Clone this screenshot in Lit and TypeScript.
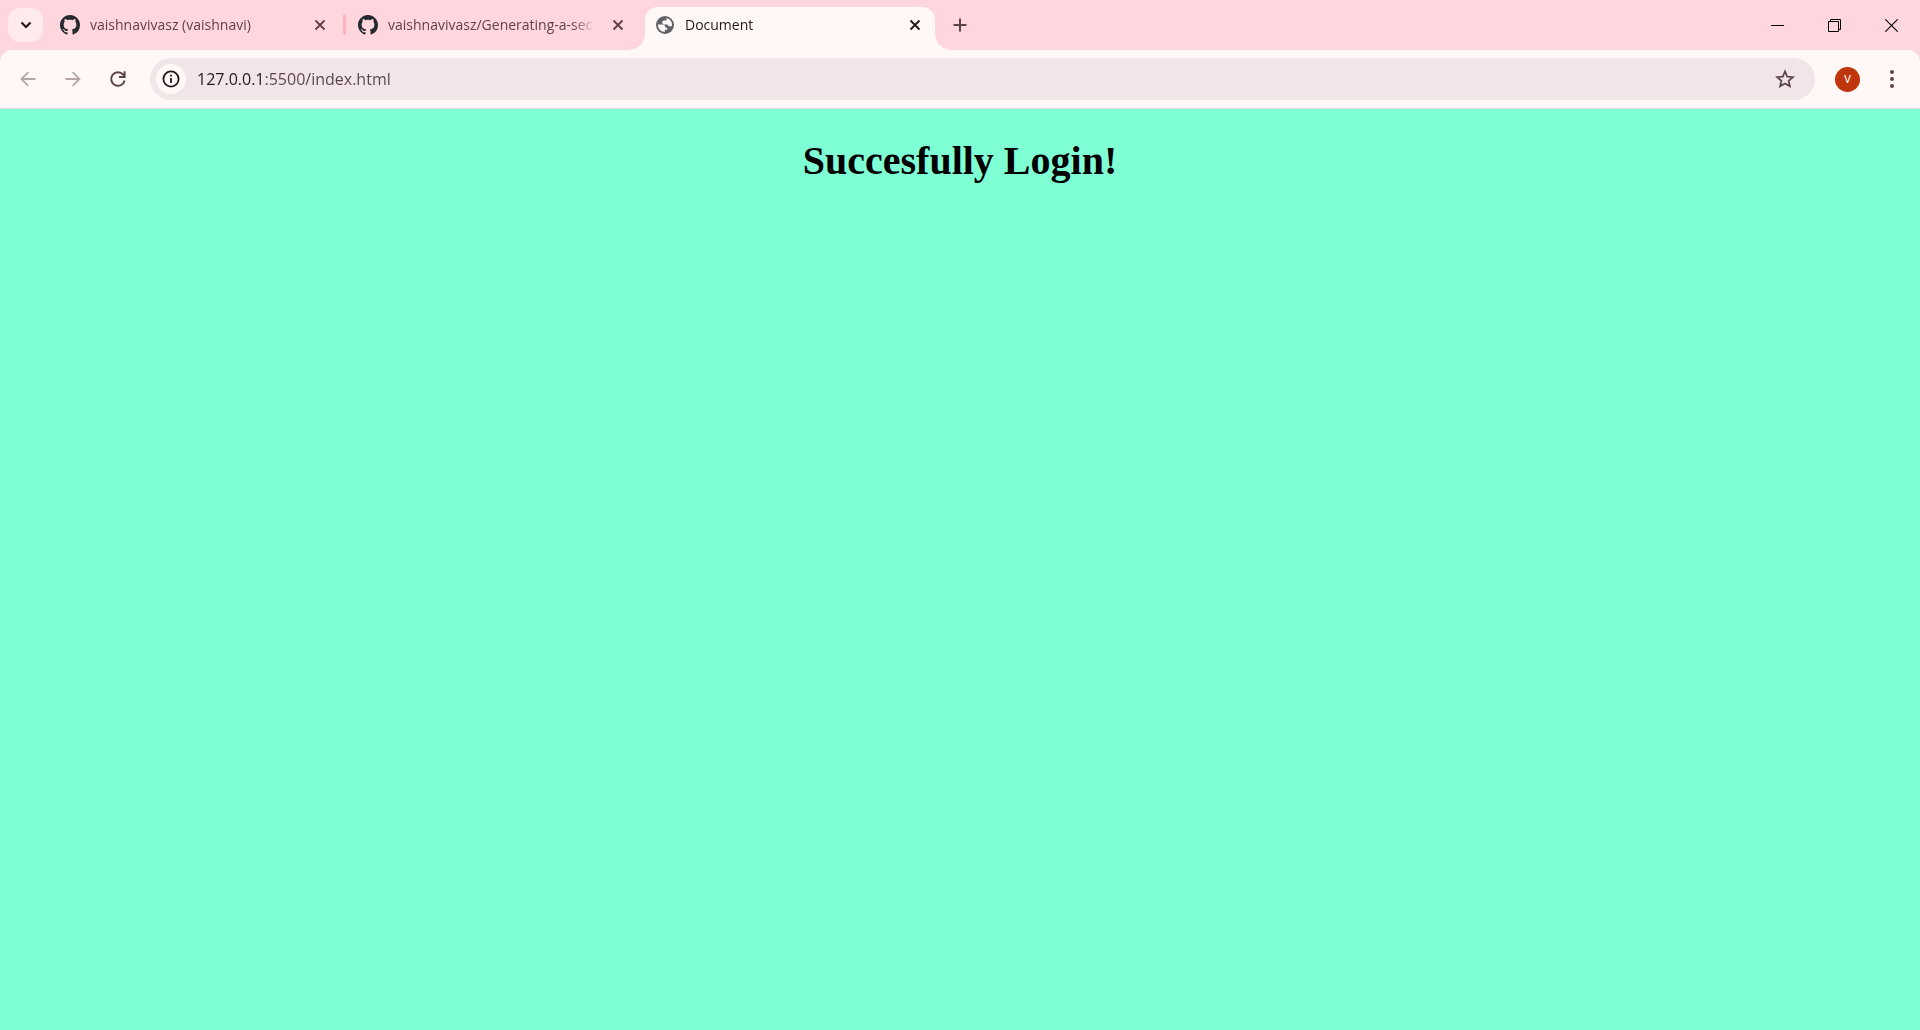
import { LitElement, html, css, svg, nothing } from "lit";
import { customElement, property } from "lit/decorators.js";
import { classMap } from "lit/directives/class-map.js";

const githubMark = svg`<svg viewBox="0 0 16 16" width="20" height="20" fill="#24292f" aria-hidden="true">
  <path d="M8 0C3.58 0 0 3.58 0 8c0 3.54 2.29 6.53 5.47 7.59.4.07.55-.17.55-.38 0-.19-.01-.82-.01-1.49-2.01.37-2.53-.49-2.69-.94-.09-.23-.48-.94-.82-1.13-.28-.15-.68-.52-.01-.53.63-.01 1.08.58 1.23.82.72 1.21 1.87.87 2.33.66.07-.52.28-.87.51-1.07-1.78-.2-3.64-.89-3.64-3.95 0-.87.31-1.59.82-2.15-.08-.2-.36-1.02.08-2.12 0 0 .67-.21 2.2.82.64-.18 1.32-.27 2-.27s1.36.09 2 .27c1.53-1.04 2.2-.82 2.2-.82.44 1.1.16 1.92.08 2.12.51.56.82 1.27.82 2.15 0 3.07-1.87 3.75-3.65 3.95.29.25.54.73.54 1.48 0 1.07-.01 1.93-.01 2.2 0 .21.15.46.55.38A8.01 8.01 0 0 0 16 8c0-4.42-3.58-8-8-8z"/></svg>`;

const globe = svg`<svg viewBox="0 0 20 20" width="20" height="20" aria-hidden="true">
  <circle cx="10" cy="10" r="9" fill="#5f6368"/>
  <path d="M2.900 9.600h4.300c2 0 3.100 1 3.100 2.300v.9h2v2h-2.500v2.300A7.100 7.100 0 0 1 2.900 9.600z" fill="#fff8f7"/>
  <path d="M11.600 3.100A7.100 7.100 0 0 1 17.100 10.400c-.5.700-1.200 1.100-2.100 1.100-1.500 0-2.100-.8-2.400-1.900H9.700c-1.500 0-2.500-.8-2.500-2.100 0-1.200.9-1.900 2.100-1.900h1.100c.8 0 1.200-.5 1.200-1.200z" fill="#fff8f7"/></svg>`;

const cross = svg`<svg viewBox="0 0 20 20" width="20" height="20" aria-hidden="true">
  <path d="M5.500 5.500l9 9M14.500 5.500l-9 9" stroke="currentColor" stroke-width="1.900"/></svg>`;

@customElement("browser-tab")
export class BrowserTab extends LitElement {
  @property() label = "";
  @property() icon: "github" | "globe" = "globe";
  @property({ type: Boolean }) active = false;

  static styles = css`
    :host { display: block; flex: 0 1 auto; width: 290px; min-width: 0; }
    .tab {
      position: relative;
      display: flex;
      align-items: center;
      height: 43px;
      box-sizing: border-box;
      padding: 0 10px 7px;
      color: #5f4248;
    }
    .active { background: #fff8f7; color: #22191b; border-radius: 13px 13px 0 0; }
    .active::before, .active::after {
      content: "";
      position: absolute;
      bottom: 0;
      width: 15px;
      height: 15px;
    }
    .active::before { right: 100%; background: radial-gradient(circle at 0 0, transparent 14px, #fff8f7 15px); }
    .active::after { left: 100%; background: radial-gradient(circle at 100% 0, transparent 14px, #fff8f7 15px); }
    .icon, .close { display: flex; flex: none; }
    .label {
      flex: 1;
      min-width: 0;
      margin: 0 12px 0 10px;
      overflow: hidden;
      white-space: nowrap;
      font-size: 14px;
      line-height: 20px;
      mask-image: linear-gradient(to left, transparent, #000 24px);
    }
    .close { border: 0; padding: 0; background: none; color: inherit; }
  `;

  render() {
    return html`<div class=${classMap({ tab: true, active: this.active })}
        role="tab" aria-selected=${this.active ? "true" : "false"}>
      <span class="icon">${this.icon === "github" ? githubMark : globe}</span>
      <span class="label">${this.label}</span>
      <button class="close" aria-label="Close tab">${cross}</button>
    </div>`;
  }
}

@customElement("app-root")
export class AppRoot extends LitElement {
  static styles = css`
    :host {
      display: flex;
      flex-direction: column;
      min-height: 100vh;
      font-family: "Open Sans", "Noto Sans", sans-serif;
      background: #7fffd4;
    }
    button {
      display: flex;
      align-items: center;
      justify-content: center;
      flex: none;
      border: 0;
      padding: 0;
      background: none;
      color: #5f4248;
    }
    .frame { background: #ffd6de; }
    .strip { display: flex; align-items: center; height: 50px; }
    .search { width: 35px; height: 34px; margin: 0 7px 0 8px; border-radius: 12px; background: #ffebee; color: #22191b; }
    .tabs { display: flex; align-items: center; align-self: flex-end; min-width: 0; }
    .divider { flex: none; width: 3px; height: 21px; margin: 0 2px 8px 3px; border-radius: 2px; background: #ffb1c0; }
    .tabs browser-tab[active] { margin-left: 7px; }
    .add { width: 30px; height: 30px; margin-left: 10px; }
    .window { display: flex; align-self: stretch; margin-left: auto; color: #000; }
    .window button { width: 57px; color: inherit; }
    .toolbar {
      display: flex;
      align-items: center;
      height: 58px;
      background: #fff8f7;
      border-radius: 12px 12px 0 0;
      border-bottom: 1px solid #eadfe2;
    }
    .nav { display: flex; gap: 10px; padding-left: 10px; }
    .nav button { width: 35px; height: 35px; }
    .nav button:disabled { color: #b5a5a8; }
    .address {
      flex: 1;
      min-width: 0;
      display: flex;
      align-items: center;
      height: 42px;
      margin-left: 15px;
      padding: 0 20px 0 6px;
      box-sizing: border-box;
      border-radius: 21px;
      background: #f1e5e9;
    }
    .info { width: 30px; height: 30px; border-radius: 50%; background: #fff8f7; color: #22191b; }
    .url {
      flex: 1;
      min-width: 0;
      margin: 0 12px 0 11px;
      padding: 0;
      border: 0;
      outline: 0;
      font: 16px/24px "Open Sans", "Noto Sans", sans-serif;
      color: #22191b;
      background: linear-gradient(to right, #22191b 67px, #5a4347 67px);
      background-clip: text;
      -webkit-text-fill-color: transparent;
    }
    .avatar { width: 25px; height: 25px; margin-left: 20px; border-radius: 50%; background: #bf360c; color: #fff; font: 11px/25px Roboto, sans-serif; }
    .menu { width: 24px; height: 34px; margin: 0 16px 0 20px; }
    .page { flex: 1; padding: 8px; }
    h1 { margin: 21px 0; text-align: center; font: bold 40px/46px "Liberation Serif", serif; color: #000; }
  `;

  private tabs = [
    { label: "vaishnavivasz (vaishnavi)", icon: "github", active: false },
    { label: "vaishnavivasz/Generating-a-sec", icon: "github", active: false },
    { label: "Document", icon: "globe", active: true },
  ];

  render() {
    return html`
      <header class="frame">
        <div class="strip">
          <button class="search" aria-label="Search tabs">
            <svg width="16" height="16" viewBox="0 0 16 16"><path d="M3.500 5.500L8 10l4.500-4.500" fill="none" stroke="currentColor" stroke-width="2.200"/></svg>
          </button>
          <div class="tabs" role="tablist">
            ${this.tabs.map((t, i) => html`
              ${i === 1 ? html`<span class="divider"></span>` : nothing}
              <browser-tab .label=${t.label} .icon=${t.icon as "github" | "globe"} ?active=${t.active}></browser-tab>`)}
          </div>
          <button class="add" aria-label="New tab">
            <svg width="14" height="14" viewBox="0 0 14 14"><path d="M7 .5v13M.5 7h13" stroke="currentColor" stroke-width="2"/></svg>
          </button>
          <div class="window">
            <button aria-label="Minimize"><svg width="13" height="13" viewBox="0 0 13 13"><path d="M0 6.500h13" stroke="currentColor"/></svg></button>
            <button aria-label="Restore"><svg width="13" height="13" viewBox="0 0 13 13" fill="none" stroke="currentColor"><path d="M.5 2.500h10v10H.5zM2.500 2.500v-2h10v10h-2"/></svg></button>
            <button aria-label="Close window"><svg width="13" height="13" viewBox="0 0 13 13"><path d="M.3.3l12.400 12.400M12.700.3L.3 12.700" stroke="currentColor" stroke-width="1.100"/></svg></button>
          </div>
        </div>
        <div class="toolbar">
          <nav class="nav">
            <button disabled aria-label="Back"><svg width="16" height="16" viewBox="0 0 16 16" fill="none" stroke="currentColor" stroke-width="1.800"><path d="M15.500 8H2M8.300 1.200L1.500 8l6.800 6.800"/></svg></button>
            <button disabled aria-label="Forward"><svg width="16" height="16" viewBox="0 0 16 16" fill="none" stroke="currentColor" stroke-width="1.800"><path d="M.5 8H14M7.700 1.200L14.500 8l-6.800 6.800"/></svg></button>
            <button aria-label="Reload"><svg width="18" height="18" viewBox="0 0 18 18" fill="none" stroke="currentColor" stroke-width="2"><path d="M15.600 10.500A6.800 6.800 0 1 1 14.200 4.600L15.600 6.200M15.600 1.300V7H10"/></svg></button>
          </nav>
          <div class="address">
            <button class="info" aria-label="View site information">
              <svg width="18" height="18" viewBox="0 0 18 18"><circle cx="9" cy="9" r="7.600" fill="none" stroke="currentColor" stroke-width="1.800"/><path d="M9 8v5M9 4.800v1.800" stroke="currentColor" stroke-width="1.800"/></svg>
            </button>
            <input class="url" type="text" aria-label="Address" value="127.0.0.1:5500/index.html">
            <button aria-label="Bookmark this tab">
              <svg width="20" height="20" viewBox="0 0 20 20"><path d="M10 2.400l2.200 5.200 5.700.5-4.300 3.700 1.300 5.500L10 14.400l-4.900 2.900 1.300-5.500-4.300-3.700 5.700-.5z" fill="none" stroke="#5a4347" stroke-width="1.700"/></svg>
            </button>
          </div>
          <button class="avatar" aria-label="Profile">V</button>
          <button class="menu" aria-label="Menu">
            <svg width="4" height="18" viewBox="0 0 4 18" fill="currentColor"><circle cx="2" cy="2" r="2"/><circle cx="2" cy="9" r="2"/><circle cx="2" cy="16" r="2"/></svg>
          </button>
        </div>
      </header>
      <main class="page"><h1>Succesfully Login!</h1></main>
    `;
  }
}
